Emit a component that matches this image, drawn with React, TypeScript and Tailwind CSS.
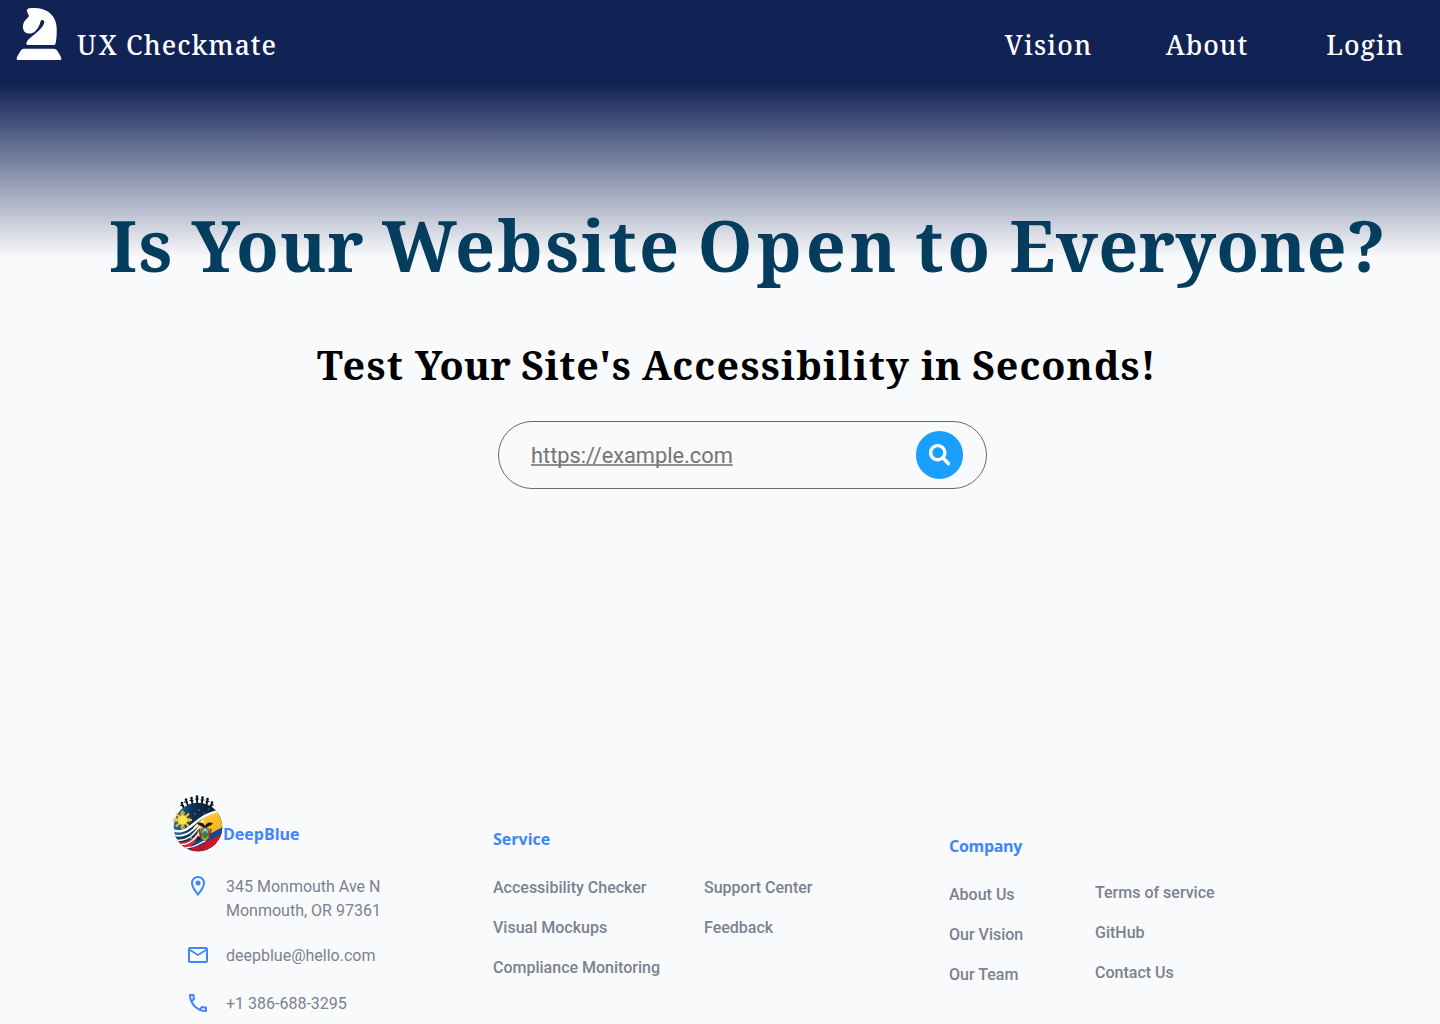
import React from "react";
import { FaSearch } from "react-icons/fa";
import { MdOutlineLocationOn, MdOutlineEmail, MdOutlinePhone } from "react-icons/md";

function Knight() {
  return (
    <svg viewBox="0 0 138 160" className="h-[53px] w-[46px] shrink-0" fill="#fff">
      <path d="M33 6Q34 1 40 1C52 -1 67 0 78 3C107 11 122 34 122.500 63C123 83 121 98 119 107Q118 112 113 112H36Q30 112 31 106C33 96 44 89 55 80C72 67 82 56 85 44C86 36 76 34 74 40C71 54 64 65 54 73C45 79 33 78 27 73C20 67 19 55 22 47C25 38 32 33 38 26C39 22 36 18 35 15C33 12 32 10 33 6Z" />
      <path d="M17 125Q19 123 24 123H113Q118 123 121 125Q126 129 134 146Q140 157 132 157H6Q-2 157 4 146Q12 129 17 125Z" />
    </svg>
  );
}

function GlobeLogo() {
  return (
    <svg viewBox="0 0 50 58" className="-mt-px h-[58px] w-[50px] shrink-0">
      <defs>
        <clipPath id="globe"><circle cx="25" cy="33" r="24.300" /></clipPath>
        <linearGradient id="sky" x1="0" y1="0.2" x2="1" y2="0.3">
          <stop offset="0" stopColor="#2a7ba6" />
          <stop offset="0.4" stopColor="#0d2f52" />
          <stop offset="1" stopColor="#07152d" />
        </linearGradient>
        <linearGradient id="gold" x1="0" y1="0" x2="1" y2="1">
          <stop offset="0" stopColor="#ffd84a" />
          <stop offset="1" stopColor="#f5a80c" />
        </linearGradient>
      </defs>
      <g stroke="#0b1322" strokeWidth="1.900" strokeLinecap="round" fill="#0b1322">
        {[[9, 9, 12, 17], [13, 5.500, 16, 14], [18.500, 4, 20, 13], [24, 2.500, 24, 12], [29.500, 3.500, 28.500, 12], [34.500, 5, 33, 13], [39, 8.500, 36, 16]].map(([x, y, a, b]) => (
          <g key={x}>
            <circle cx={x} cy={y} r="1.300" stroke="none" />
            <path d={`M${x} ${y + 1}L${a} ${b}`} />
            <path d={`M${x - 1.500} ${y + 2.500}H${x + 1.500}`} strokeWidth="1.200" />
          </g>
        ))}
      </g>
      <g clipPath="url(#globe)">
        <rect width="50" height="58" fill="url(#sky)" />
        <path d="M20 34C27 25 36 20 46 16L52 30C48 37 40 39 33 43C25 44 20 40 20 34Z" fill="url(#gold)" />
        <path d="M20 48C30 46 38 38 52 32V43C42 42 32 52 20 53Z" fill="#15479a" />
        <path d="M20 53C32 51 40 43 52 39V58H16Z" fill="#cf1728" />
        <path d="M-1 40C12 46 20 37 27 28C25 44 18 52 8 53L-1 48Z" fill="#123761" />
        <path d="M3 48C14 50 21 44 25 38C25 48 18 55 9 54Z" fill="#d82936" />
        <path d="M12 56C24 55 30 50 33 47C34 53 30 57 26 58Z" fill="#b31a29" />
        <g fill="none" stroke="#fff" strokeLinecap="round">
          <path d="M-1 36C12 41 18 31 27 25C34 20 40 18 46 17" strokeWidth="2.400" />
          <path d="M0 41C14 45 21 34 30 27" strokeWidth="1.800" />
          <path d="M3 46C16 48 22 38 27 32" strokeWidth="1.500" />
          <path d="M7 50.500C18 51 23 43 27 38M11 54C23 54 28 48 32 47" strokeWidth="1.400" />
        </g>
        <g fill="#dcecf7"><circle cx="26" cy="16" r=".6" /><circle cx="31" cy="19" r=".5" /><circle cx="22" cy="20" r=".6" /><circle cx="36" cy="15" r=".5" /><circle cx="18" cy="44" r=".8" /></g>
      </g>
      <g stroke="#efc936" strokeWidth="2">
        <path d="M9.500 16.500V35.500M0 26H19M3 19.500L16 32.500M16 19.500L3 32.500" />
        <path d="M7.500 18L11.500 34M11.500 18L7.500 34M1.500 24L17.500 28M1.500 28L17.500 24" strokeWidth=".8" />
      </g>
      <circle cx="9.500" cy="26" r="5" fill="#ffe052" stroke="#dda516" strokeWidth=".7" />
      <g transform="translate(0 -1)">
        <path d="M32 33C29 28 27 30 24 30C25 32.500 28 33 30 34L29 37H35L34 34C36 33 39 32.500 40 30C37 30 35 28 32 33Z" fill="#20170f" />
        <path d="M26.500 35L28 45L32 48L36 45L37.500 35Z" fill="#c39b20" />
        <path d="M26 36L28 45M38 36L36 45" stroke="#a91d26" strokeWidth="1.500" />
        <ellipse cx="32" cy="39.500" rx="3.800" ry="5" fill="#55b6d2" stroke="#584116" strokeWidth=".8" />
        <path d="M28.500 41L32 38L35.500 41Q35 44 32 44.300Q29 44 28.500 41Z" fill="#3f7f43" />
        <circle cx="32" cy="37" r="1" fill="#ffe052" />
      </g>
    </svg>
  );
}

const labelClass = "font-['Open_Sans',sans-serif] text-base leading-6 font-bold text-[#3f85fb]";

function Links({ items }: { items: string[] }) {
  return (
    <ul className="flex flex-col gap-4 whitespace-nowrap font-medium">
      {items.map((item) => (
        <li key={item}><a href="#">{item}</a></li>
      ))}
    </ul>
  );
}

export default function App() {
  return (
    <div className="h-[1024px] w-[1440px] overflow-hidden bg-[#f9fafc] bg-[linear-gradient(180deg,#112254_0px,#112254_84px,#f9fafc_258px)] font-[Roboto,sans-serif]">
      <header className="flex h-[84px] items-start pl-4 font-['Noto_Serif','Liberation_Serif',serif] text-[26.5px] leading-8 font-medium whitespace-nowrap text-white">
        <div className="mt-2"><Knight /></div>
        <div className="mt-[29px] ml-[15px] flex">
          <span className="w-[49px] tracking-[2.5px]">UX</span>
          <span className="tracking-[1px]">Checkmate</span>
        </div>
        <nav className="mt-[29px] mr-[36px] ml-auto flex">
          <a href="#" className="w-[161px] tracking-[1.2px]">Vision</a>
          <a href="#" className="w-[160.5px] tracking-[0.9px]">About</a>
          <a href="#" className="tracking-[1px]">Login</a>
        </nav>
      </header>

      <main className="h-[711px]">
        <h1 className="flex pt-[119px] pl-[109px] font-['Noto_Serif','Liberation_Serif',serif] text-[70px] leading-[84px] font-bold whitespace-nowrap text-[#043d5d]">
          <span className="w-[82.5px] tracking-[1.5px]">Is</span>
          <span className="w-[190.5px] tracking-[0.8px]">Your</span>
          <span className="w-[315.5px] tracking-[2.4px]">Website</span>
          <span className="w-[217.5px] tracking-[4px]">Open</span>
          <span className="w-[94.5px] tracking-[4px]">to</span>
          <span className="tracking-[0.3px]">Everyone?</span>
        </h1>
        <h2 className="flex pt-[54px] pl-[317px] font-['Noto_Serif','Liberation_Serif',serif] text-[39.5px] leading-[48px] font-bold whitespace-nowrap text-black">
          <span className="w-[98px] tracking-[1.3px]">Test</span>
          <span className="w-[106px]">Your</span>
          <span className="w-[121px] tracking-[0.8px]">Site's</span>
          <span className="w-[279px] tracking-[1.3px]">Accessibility</span>
          <span className="w-[51px]">in</span>
          <span className="tracking-[1px]">Seconds!</span>
        </h2>
        <form className="mt-8 ml-[498px] flex h-[68px] w-[489px] items-center justify-between rounded-full border border-[#6a6a6e] pr-[23px] pl-8">
          <span className="pt-px text-[21.8px] leading-7 text-[#747474] underline decoration-[#8f8f8f] decoration-2 underline-offset-1 [text-decoration-skip-ink:none]">https://example.com</span>
          <button type="button" aria-label="Search" className="flex size-[47.4px] items-center justify-center rounded-full bg-[#1a9ffd] text-white">
            <FaSearch size={21.5} />
          </button>
        </form>
      </main>

      <footer className="flex h-[229px] items-start pl-[173px] text-base leading-6 text-[#7b828e]">
        <section className="w-80">
          <div className="flex h-[58px]">
            <GlobeLogo />
            <h3 className={`mt-[27px] ${labelClass}`}>DeepBlue</h3>
          </div>
          <address className="mt-[22px] ml-[13px] flex flex-col not-italic">
            <div className="flex gap-4">
              <MdOutlineLocationOn size={24} className="-mt-px shrink-0 text-[#3f85fb]" />
              <p>345 Monmouth Ave N<br />Monmouth, OR 97361</p>
            </div>
            <div className="mt-[21px] flex gap-4">
              <MdOutlineEmail size={24} className="-mt-px text-[#3f85fb]" />
              <p>deepblue@hello.com</p>
            </div>
            <div className="mt-6 flex gap-4">
              <MdOutlinePhone size={24} className="-mt-px text-[#3f85fb]" />
              <p>+1 386-688-3295</p>
            </div>
          </address>
        </section>
        <section className="mt-8 w-[456px]">
          <h3 className={labelClass}>Service</h3>
          <div className="mt-[25px] grid grid-cols-[211px_auto]">
            <Links items={["Accessibility Checker", "Visual Mockups", "Compliance Monitoring"]} />
            <Links items={["Support Center", "Feedback"]} />
          </div>
        </section>
        <section className="mt-[39px]">
          <h3 className={`tracking-[-0.3px] ${labelClass}`}>Company</h3>
          <div className="mt-[23px] grid grid-cols-[146px_auto] items-start">
            <div className="pt-0.5"><Links items={["About Us", "Our Vision", "Our Team"]} /></div>
            <Links items={["Terms of service", "GitHub", "Contact Us"]} />
          </div>
        </section>
      </footer>
    </div>
  );
}
